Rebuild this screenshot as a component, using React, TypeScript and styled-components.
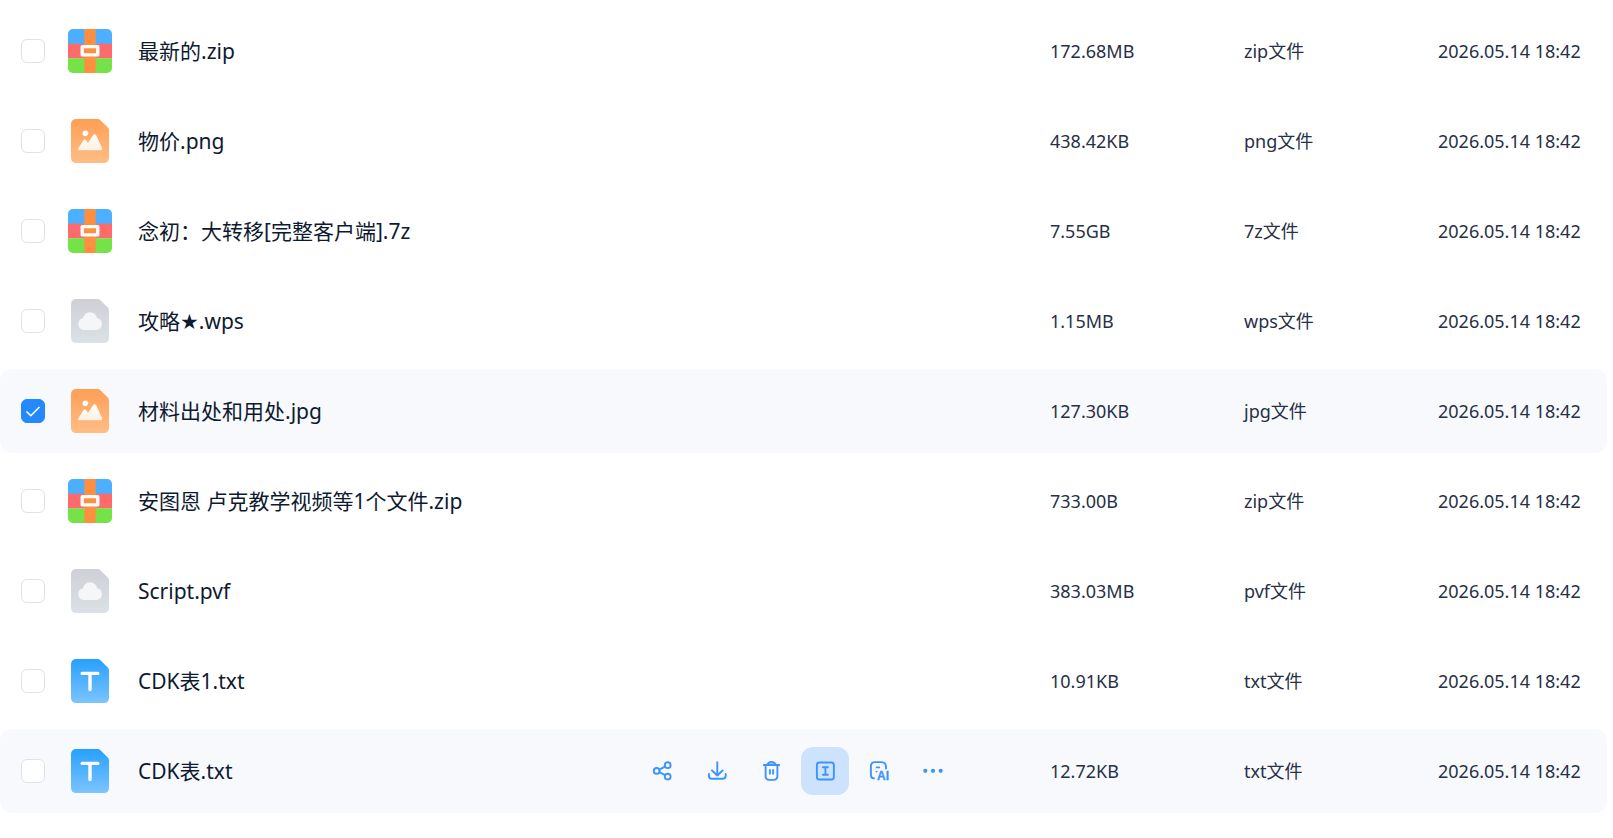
import React, { useState } from 'react';
import styled, { createGlobalStyle } from 'styled-components';

const GlobalStyle = createGlobalStyle`
  *, *::before, *::after { box-sizing: border-box; }
  body {
    margin: 0;
    background: #fff;
    color: #0e1a30;
    font-family: "Noto Sans", "DejaVu Sans", "Noto Sans CJK SC", sans-serif;
  }
`;

const Page = styled.main`
  padding: 3px 6px 0 0;
`;

const FileTable = styled.table`
  width: 100%;
  table-layout: fixed;
  border-collapse: separate;
  border-spacing: 0 6px;
`;

const CheckCol = styled.col`
  width: 68px;
`;

const IconCol = styled.col`
  width: 70px;
`;

const MetaCol = styled.col`
  width: 194px;
`;

const DateCol = styled.col`
  width: 169px;
`;

const Row = styled.tr<{ $tinted: boolean }>`
  height: 84px;
  background: ${(p) => (p.$tinted ? '#f7f9fd' : 'transparent')};

  & > :first-child {
    padding-left: 21px;
    border-radius: 12px 0 0 12px;
  }

  & > :last-child {
    border-radius: 0 12px 12px 0;
  }
`;

const Cell = styled.td`
  padding: 0;
  vertical-align: middle;
`;

const MetaCell = styled(Cell)`
  color: #273046;
  font-size: 18px;
  line-height: 24px;
  white-space: nowrap;
`;

const CheckBox = styled.span`
  display: grid;
  width: 24px;
  height: 24px;

  & > * {
    grid-area: 1 / 1;
  }

  svg {
    pointer-events: none;
  }
`;

const CheckInput = styled.input`
  appearance: none;
  width: 24px;
  height: 24px;
  margin: 0;
  border: 1px solid #dfe2ea;
  border-radius: 6px;
  background: #fff;
  cursor: pointer;

  &:checked {
    border-color: #2489ff;
    background: #2489ff;
  }
`;

const Glyph = styled.svg`
  display: block;
`;

const NameLine = styled.div`
  display: flex;
  align-items: center;
  justify-content: space-between;
  padding-right: 93px;
`;

const FileName = styled.label`
  font-size: 21px;
  line-height: 30px;
  white-space: nowrap;
  cursor: pointer;
`;

const Actions = styled.div`
  display: flex;
  gap: 6px;
`;

const ActionButton = styled.button<{ $active?: boolean }>`
  display: grid;
  place-items: center;
  width: 48px;
  height: 48px;
  padding: 0;
  border: 0;
  border-radius: 12px;
  background: ${(p) => (p.$active ? '#cde2fd' : 'transparent')};
  color: #3d94ff;
  cursor: pointer;
`;

type Kind = 'archive' | 'image' | 'other' | 'text';

interface FileEntry {
  name: string;
  kind: Kind;
  size: string;
  type: string;
  hovered?: boolean;
}

const modified = '2026.05.14 18:42';

const files: FileEntry[] = [
  { name: '最新的.zip', kind: 'archive', size: '172.68MB', type: 'zip文件' },
  { name: '物价.png', kind: 'image', size: '438.42KB', type: 'png文件' },
  { name: '念初：大转移[完整客户端].7z', kind: 'archive', size: '7.55GB', type: '7z文件' },
  { name: '攻略★.wps', kind: 'other', size: '1.15MB', type: 'wps文件' },
  { name: '材料出处和用处.jpg', kind: 'image', size: '127.30KB', type: 'jpg文件' },
  { name: '安图恩 卢克教学视频等1个文件.zip', kind: 'archive', size: '733.00B', type: 'zip文件' },
  { name: 'Script.pvf', kind: 'other', size: '383.03MB', type: 'pvf文件' },
  { name: 'CDK表1.txt', kind: 'text', size: '10.91KB', type: 'txt文件' },
  { name: 'CDK表.txt', kind: 'text', size: '12.72KB', type: 'txt文件', hovered: true },
];

const sheetColors: Record<Exclude<Kind, 'archive'>, [string, string]> = {
  image: ['#ff9f55', '#ffbd85'],
  other: ['#cfd0d6', '#dbe1e6'],
  text: ['#27a0ff', '#7cc4ff'],
};

function FileIcon({ kind, id }: { kind: Kind; id: string }) {
  if (kind === 'archive') {
    return (
      <Glyph width="44" height="44" viewBox="0 0 44 44" aria-hidden="true">
        <clipPath id={`${id}-clip`}>
          <rect width="44" height="44" rx="5" />
        </clipPath>
        <g clipPath={`url(#${id}-clip)`}>
          <rect width="44" height="15" fill="#4dafff" />
          <rect y="14.7" width="44" height="14.8" fill="#ff6b6b" />
          <rect y="29.3" width="44" height="14.7" fill="#75e348" />
          <rect x="16.3" width="11.4" height="44" fill="#ff8f40" />
        </g>
        <rect x="14.2" y="17.7" width="15.6" height="8.2" fill="#ff8f40" stroke="#fff" strokeWidth="3.3" strokeLinejoin="round" />
      </Glyph>
    );
  }
  const [top, bottom] = sheetColors[kind];
  return (
    <Glyph width="44" height="44" viewBox="0 0 44 44" aria-hidden="true">
      <defs>
        <linearGradient id={`${id}-sheet`} x1="0" y1="0" x2="0" y2="1">
          <stop offset="0" stopColor={top} />
          <stop offset="1" stopColor={bottom} />
        </linearGradient>
        <linearGradient id={`${id}-hill`} x1="0" y1="0" x2="0" y2="1">
          <stop offset="0" stopColor="#fff" />
          <stop offset="1" stopColor="#fff" stopOpacity="0.8" />
        </linearGradient>
      </defs>
      <path
        d="M8.5 0H29.5Q31.2 0 32.4 1.2L39.8 8.6Q41 9.8 41 11.5V38.5Q41 44 35.5 44H8.5Q3 44 3 38.5V5.5Q3 0 8.5 0Z"
        fill={`url(#${id}-sheet)`}
      />
      {kind === 'image' && (
        <>
          <circle cx="17.4" cy="14.2" r="2.8" fill="#fff" />
          <path
            d="M10.3 29.3 15.4 21.2Q16.8 19.4 18.2 21.2L20 24 25 16.2Q26.6 14.2 28.2 16.2L34.2 29.2Q34.8 31.2 33 31.2H11.2Q9.3 31.2 10.3 29.3Z"
            fill={`url(#${id}-hill)`}
          />
        </>
      )}
      {kind === 'other' && (
        <path
          d="M15.5 31A6 6 0 0 1 15 19.2A7.2 7.2 0 0 1 29.2 19.2A6 6 0 0 1 28.7 31Z"
          fill="#f4f6f8"
        />
      )}
      {kind === 'text' && (
        <path d="M14.2 14.4H29.8M22 14.4V30.5" stroke="#fff" strokeWidth="3.4" strokeLinecap="round" fill="none" />
      )}
    </Glyph>
  );
}

function ActionGlyph({ children }: { children: React.ReactNode }) {
  return (
    <Glyph
      width="22"
      height="22"
      viewBox="0 0 22 22"
      fill="none"
      stroke="currentColor"
      strokeWidth="1.9"
      strokeLinecap="round"
      strokeLinejoin="round"
      aria-hidden="true"
    >
      {children}
    </Glyph>
  );
}

function RowActions() {
  return (
    <Actions>
      <ActionButton type="button" aria-label="分享">
        <ActionGlyph>
          <circle cx="4.7" cy="10.9" r="2.9" />
          <circle cx="15.7" cy="5.2" r="2.9" />
          <circle cx="15.7" cy="16.6" r="2.9" />
          <path d="M7.4 9.6 13 6.6M7.4 12.2 13 15.2" />
        </ActionGlyph>
      </ActionButton>
      <ActionButton type="button" aria-label="下载">
        <ActionGlyph>
          <path d="M11.3 2.3V15.300M6 10.5 11.3 15.5 16.6 10.5M2.9 14V15.8A3 3 0 0 0 5.9 18.8H16.7A3 3 0 0 0 19.7 15.8V14" />
        </ActionGlyph>
      </ActionButton>
      <ActionButton type="button" aria-label="删除">
        <ActionGlyph>
          <path d="M7.2 4.900Q8.400 1.900 11.5 1.900T15.800 4.900Z" fill="currentColor" fillOpacity="0.5" />
          <path d="M3.8 5H19.2M5.600 5.200V16.500A3.400 3.400 0 0 0 9 19.900H14A3.400 3.400 0 0 0 17.400 16.500V5.200M9.900 10V13.800M13.100 10V13.800" />
        </ActionGlyph>
      </ActionButton>
      <ActionButton type="button" aria-label="重命名" $active>
        <ActionGlyph>
          <rect x="2.9" y="2.5" width="17" height="17" rx="2.5" />
          <path d="M8.9 7.200H13.9M8.9 14.800H13.9M11.4 7.200V14.800" />
        </ActionGlyph>
      </ActionButton>
      <ActionButton type="button" aria-label="AI 助手">
        <ActionGlyph>
          <path d="M6 18.400Q2.900 18.200 2.900 15V6.300Q2.900 2.100 7.100 2.100H12.900Q17.600 2.100 18 6.300V8.500M8.600 7.400H11.200M8.500 11.600H8.600" />
          <text
            x="9"
            y="19.700"
            fill="currentColor"
            stroke="currentColor"
            strokeWidth="0.300"
            fontFamily="Liberation Sans, sans-serif"
            fontSize="12"
            fontWeight="700"
          >
            AI
          </text>
        </ActionGlyph>
      </ActionButton>
      <ActionButton type="button" aria-label="更多">
        <ActionGlyph>
          <g fill="currentColor" stroke="none">
            <circle cx="3.3" cy="10.8" r="2.1" />
            <circle cx="11" cy="10.8" r="2.1" />
            <circle cx="18.7" cy="10.8" r="2.1" />
          </g>
        </ActionGlyph>
      </ActionButton>
    </Actions>
  );
}

export default function App() {
  const [selected, setSelected] = useState<number[]>([4]);

  const toggle = (index: number) =>
    setSelected((current) =>
      current.includes(index) ? current.filter((i) => i !== index) : [...current, index],
    );

  return (
    <>
      <GlobalStyle />
      <Page>
        <FileTable aria-label="文件列表">
          <colgroup>
            <CheckCol />
            <IconCol />
            <col />
            <MetaCol />
            <MetaCol />
            <DateCol />
          </colgroup>
          <tbody>
            {files.map((file, index) => {
              const checked = selected.includes(index);
              const id = `file-${index}`;
              return (
                <Row key={file.name} $tinted={checked || !!file.hovered}>
                  <Cell>
                    <CheckBox>
                      <CheckInput id={id} type="checkbox" checked={checked} onChange={() => toggle(index)} />
                      {checked && (
                        <Glyph width="24" height="24" viewBox="0 0 24 24" aria-hidden="true">
                          <path d="M5.5 12.5 9.8 16.7 18.5 8" fill="none" stroke="#fff" strokeWidth="1.6" />
                        </Glyph>
                      )}
                    </CheckBox>
                  </Cell>
                  <Cell>
                    <FileIcon kind={file.kind} id={`${id}-icon`} />
                  </Cell>
                  <Cell>
                    <NameLine>
                      <FileName htmlFor={id}>{file.name}</FileName>
                      {file.hovered && <RowActions />}
                    </NameLine>
                  </Cell>
                  <MetaCell>{file.size}</MetaCell>
                  <MetaCell>{file.type}</MetaCell>
                  <MetaCell>{modified}</MetaCell>
                </Row>
              );
            })}
          </tbody>
        </FileTable>
      </Page>
    </>
  );
}
